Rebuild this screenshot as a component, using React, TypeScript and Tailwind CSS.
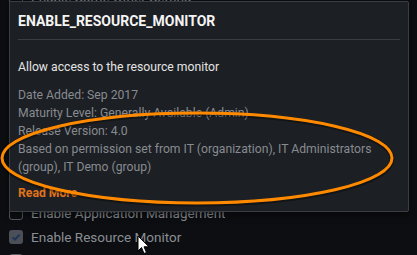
import React from 'react'

const rows = [
  { label: 'Enable Some Other Setting', checked: false },
  { label: 'Enable Setting', checked: false },
  { label: 'Enable Setting', checked: false },
  { label: 'Enable Setting', checked: false },
  { label: 'Enable Setting', checked: false },
  { label: 'Enable Setting', checked: false },
  { label: 'Enable Setting', checked: false },
  { label: 'Enable Setting', checked: false },
  { label: 'Enable Setting', checked: false },
  { label: 'Enable Application Management', checked: false },
  { label: 'Enable Resource Monitor', checked: true },
  { label: 'Enable Setting', checked: false },
]

function Checkbox({ checked }: { checked: boolean }) {
  if (checked) {
    return (
      <span className="flex h-[14px] w-[14px] shrink-0 items-center justify-center rounded-[3px] bg-[#4b5058]">
        <svg width="10" height="10" viewBox="0 0 10 10">
          <path d="M1.5 5.2 L4 7.5 L8.6 2.6" fill="none" stroke="#1f3558" strokeWidth="2" />
        </svg>
      </span>
    )
  }
  return <span className="h-[14px] w-[14px] shrink-0 rounded-[3px] border border-[#555a61]" />
}

export default function App() {
  return (
    <div
      className="relative h-[255px] w-[417px] overflow-hidden bg-[#0c0e11]"
      style={{ fontFamily: 'Roboto, "Liberation Sans", sans-serif' }}
    >
      {/* settings list behind the popover */}
      <div className="-mt-[15px] flex flex-col pl-[9px]">
        {rows.map((r, i) => (
          <div key={i} className="flex h-6 items-center gap-[8px]">
            <Checkbox checked={r.checked} />
            <span className="text-[13.5px] text-[#8a8e94]">{r.label}</span>
          </div>
        ))}
      </div>

      {/* popover */}
      <div className="absolute left-[9px] top-[1px] h-[211px] w-[400px] rounded-[2px] border border-[#3a3e44] bg-[#1c1f23] shadow-[0_2px_8px_rgba(0,0,0,0.6)]">
        <div className="mx-[8px] border-b border-[#3a3d42] pb-[9px] pt-[10px]">
          <h1 className="text-[14px] font-bold leading-[18px] text-[#f4f4f4]">ENABLE_RESOURCE_MONITOR</h1>
        </div>
        <div className="px-[8px] pt-[18px] text-[12.2px] leading-[18px]">
          <p className="text-[#e4e4e4]">Allow access to the resource monitor</p>
          <div className="mt-[10px] text-[#878b91]">
            <p>Date Added: Sep 2017</p>
            <p>Maturity Level: Generally Available (Admin)</p>
            <p>Release Version: 4.0</p>
            <p>Based on permission set from IT (organization), IT Administrators (group), IT Demo (group)</p>
          </div>
          <p className="mt-[8px] font-bold text-[#e0731c]">Read More</p>
        </div>
      </div>

      {/* annotation ellipse */}
      <svg className="pointer-events-none absolute left-0 top-0" width="417" height="255">
        <ellipse cx="197" cy="158" rx="195" ry="45" fill="none" stroke="rgba(0,0,0,0.35)" strokeWidth="5" transform="translate(0 1)" />
        <ellipse cx="197" cy="158" rx="195" ry="45" fill="none" stroke="#ff8a00" strokeWidth="3" />
      </svg>

      {/* mouse cursor */}
      <svg className="pointer-events-none absolute left-[137px] top-[235px]" width="14" height="20" viewBox="0 0 14 20">
        <path d="M1 1 L1 16 L4.5 12.5 L7 18.5 L9.5 17.5 L7 11.8 L12 11.8 Z" fill="#fff" stroke="#000" strokeWidth="1" strokeLinejoin="round" />
      </svg>
    </div>
  )
}
